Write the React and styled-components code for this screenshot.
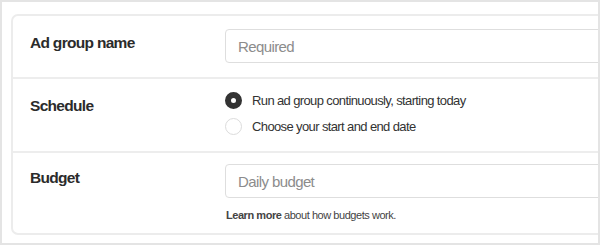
import React from 'react'
import styled, { createGlobalStyle } from 'styled-components';

const GlobalStyle = createGlobalStyle`
  html, body {
    margin: 0;
    padding: 0;
    background: #fff;
  }
  body {
    font-family: "Liberation Sans", Arial, sans-serif;
    color: #333;
  }
`;

class App extends React.Component {
  constructor(props) {
    super(props);
    this.state = {
      schedule: "continuous",
    }
  }

  pick = (value) => {
    this.setState({ schedule: value });
  }

  render() {
    return (
      <Frame>
        <GlobalStyle />
        <Card>
          <Row pad="13px 0 14px">
            <Label>Ad group name</Label>
            <Field>
              <Input type="text" placeholder="Required" />
            </Field>
          </Row>
          <Row pad="13px 0 16px">
            <Label>Schedule</Label>
            <Field>
              <Option onClick={() => this.pick("continuous")}>
                <Radio checked={this.state.schedule === "continuous"} />
                <OptionText>Run ad group continuously, starting today</OptionText>
              </Option>
              <Option onClick={() => this.pick("dates")}>
                <Radio checked={this.state.schedule === "dates"} />
                <OptionText>Choose your start and end date</OptionText>
              </Option>
            </Field>
          </Row>
          <Row pad="11px 0 10px" last>
            <Label>Budget</Label>
            <Field>
              <Input type="text" placeholder="Daily budget" />
              <Help><b>Learn more</b> about how budgets work.</Help>
            </Field>
          </Row>
        </Card>
      </Frame>
    );
  }
}

const Frame = styled.div`
  box-sizing: border-box;
  width: 600px;
  height: 245px;
  border: 2px solid #e4e4e4;
  overflow: hidden;
  padding: 12px 0 0 9px;
`;
const Card = styled.div`
  box-sizing: border-box;
  width: 640px;
  height: 221px;
  border: 2px solid #ececec;
  border-radius: 7px;
  background: #fff;
`;
const Row = styled.div`
  display: grid;
  grid-template-columns: 212px 1fr;
  align-items: start;
  padding: ${props => props.pad};
  border-bottom: ${props => props.last ? 'none' : '2px solid #ededed'};
`;
const Label = styled.div`
  padding: 4px 0 0 17px;
  font-size: 15.5px;
  line-height: 20px;
  font-weight: bold;
  letter-spacing: -0.7px;
  color: #2b2b2b;
`;
const Field = styled.div`
  display: flex;
  flex-direction: column;
`;
const Input = styled.input`
  box-sizing: border-box;
  width: 100%;
  height: 34px;
  margin: 0;
  padding: 0 12px;
  border: 1px solid #dedede;
  border-radius: 4px;
  background: #fff;
  font-family: "Liberation Sans", Arial, sans-serif;
  font-size: 15px;
  letter-spacing: -0.6px;
  color: #333;
  outline: none;
  &::placeholder {
    color: #8c8c8c;
  }
`;
const Option = styled.label`
  display: flex;
  align-items: center;
  height: 17px;
  margin-bottom: 9px;
  cursor: pointer;
  &:last-child {
    margin-bottom: 0;
  }
`;
const Radio = styled.span`
  box-sizing: border-box;
  width: 17px;
  height: 17px;
  border-radius: 50%;
  flex-shrink: 0;
  background: #fff;
  border: ${props => props.checked ? '6px solid #333' : '1px solid #dcdcdc'};
`;
const OptionText = styled.span`
  margin-left: 10px;
  font-size: 13px;
  letter-spacing: -0.62px;
  color: #333;
`;
const Help = styled.div`
  margin: 11px 0 0 1px;
  font-size: 11px;
  line-height: 13px;
  letter-spacing: -0.45px;
  color: #444;
  b {
    font-weight: bold;
  }
`;

export default App
